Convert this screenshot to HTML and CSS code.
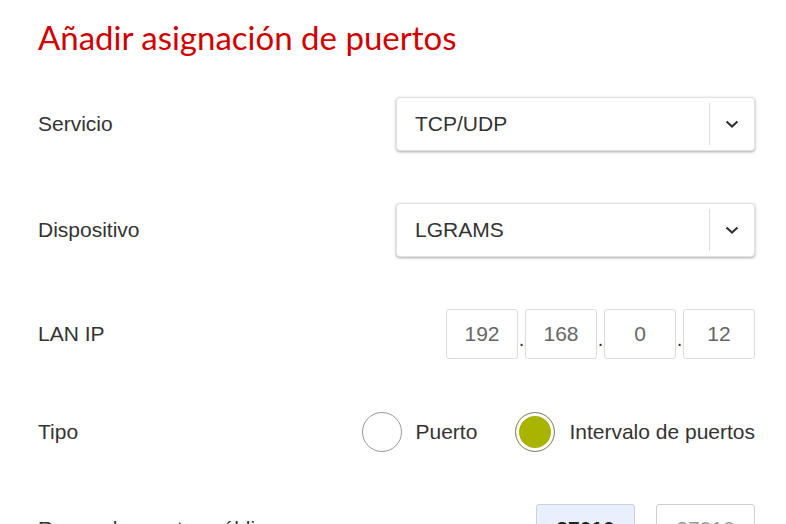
FILE: index.html
```html
<!DOCTYPE html>
<html lang="es">
<head>
<meta charset="utf-8">
<title>Añadir asignación de puertos</title>
<link rel="stylesheet" href="styles.css">
</head>
<body>
<div class="page">
  <h1 class="title">Añadir asignación de puertos</h1>
  <div class="form">
    <div class="row row-select">
      <span class="label">Servicio</span>
      <div class="select">
        <span class="select-value">TCP/UDP</span>
        <span class="select-arrow"><svg width="14" height="8" viewBox="0 0 14 8"><path d="M1.5 1.5 L7 6.5 L12.5 1.5" fill="none" stroke="#333" stroke-width="2.2"/></svg></span>
      </div>
    </div>
    <div class="row row-select">
      <span class="label">Dispositivo</span>
      <div class="select">
        <span class="select-value">LGRAMS</span>
        <span class="select-arrow"><svg width="14" height="8" viewBox="0 0 14 8"><path d="M1.5 1.5 L7 6.5 L12.5 1.5" fill="none" stroke="#333" stroke-width="2.2"/></svg></span>
      </div>
    </div>
    <div class="row row-ip">
      <span class="label">LAN IP</span>
      <div class="ip">
        <span class="ip-box">192</span><span class="ip-dot">.</span>
        <span class="ip-box">168</span><span class="ip-dot">.</span>
        <span class="ip-box">0</span><span class="ip-dot">.</span>
        <span class="ip-box">12</span>
      </div>
    </div>
    <div class="row row-radio">
      <span class="label">Tipo</span>
      <div class="radios">
        <span class="radio"><span class="radio-circle"></span><span class="radio-label">Puerto</span></span>
        <span class="radio"><span class="radio-circle checked"></span><span class="radio-label">Intervalo de puertos</span></span>
      </div>
    </div>
    <div class="row row-range">
      <span class="label">Rango de puertos públicos</span>
      <div class="range">
        <span class="range-box filled">27010</span>
        <span class="range-box">27010</span>
      </div>
    </div>
  </div>
</div>
</body>
</html>
```
FILE: styles.css
```css
html, body {
  margin: 0;
  padding: 0;
  background: #fff;
  overflow: hidden;
}
.page {
  padding: 0 31px 0 38px;
  font-family: "Liberation Sans", Arial, sans-serif;
  color: #333;
}
.title {
  margin: 0;
  padding-top: 17px;
  font-family: Lato, "Noto Sans", sans-serif;
  font-weight: 400;
  font-size: 33px;
  line-height: 40px;
  color: #d00000;
}
.form {
  display: flex;
  flex-direction: column;
  gap: 52px;
  margin-top: 40px;
}
.row {
  display: flex;
  align-items: center;
  justify-content: space-between;
}
.label {
  font-size: 21px;
  color: #333;
}
.row-select { height: 54px; }
.row-ip { height: 50px; }
.row-radio { height: 41px; }
.row-range { height: 50px; }

.select {
  width: 359px;
  height: 54px;
  box-sizing: border-box;
  border: 1px solid #e2e2e2;
  border-radius: 4px;
  box-shadow: 0 1px 3px rgba(0,0,0,0.35);
  display: flex;
  align-items: center;
  background: #fff;
}
.select-value {
  flex: 1;
  padding-left: 18px;
  font-size: 21px;
  color: #333;
}
.select-arrow {
  width: 44px;
  height: 42px;
  border-left: 1px solid #ddd;
  display: flex;
  align-items: center;
  justify-content: center;
}
.select-arrow svg { display: block; }

.ip {
  display: flex;
  align-items: flex-end;
}
.ip-box {
  width: 72px;
  height: 50px;
  box-sizing: border-box;
  border: 1px solid #dcdcdc;
  border-radius: 3px;
  display: flex;
  align-items: center;
  justify-content: center;
  font-size: 21px;
  color: #666;
}
.ip-dot {
  width: 7px;
  text-align: center;
  font-size: 20px;
  line-height: 20px;
  padding-bottom: 10px;
  color: #333;
}

.radios {
  display: flex;
  align-items: center;
  gap: 38px;
}
.radio {
  display: flex;
  align-items: center;
  gap: 14px;
}
.radio-circle {
  width: 40px;
  height: 40px;
  box-sizing: border-box;
  border: 1px solid #999;
  border-radius: 50%;
  background: #fff;
}
.radio-circle.checked {
  background: #a8b400;
  box-shadow: inset 0 0 0 3px #fff;
  border-color: #8a8a8a;
}
.radio-label {
  font-size: 21px;
  color: #333;
}

.range {
  display: flex;
  gap: 21px;
}
.range-box {
  width: 99px;
  height: 50px;
  box-sizing: border-box;
  border: 1px solid #cfcfcf;
  border-radius: 3px;
  display: flex;
  align-items: center;
  justify-content: center;
  font-size: 21px;
  color: #999;
}
.range-box.filled {
  background: #e8f0fe;
  color: #222;
  font-weight: 700;
}
```
